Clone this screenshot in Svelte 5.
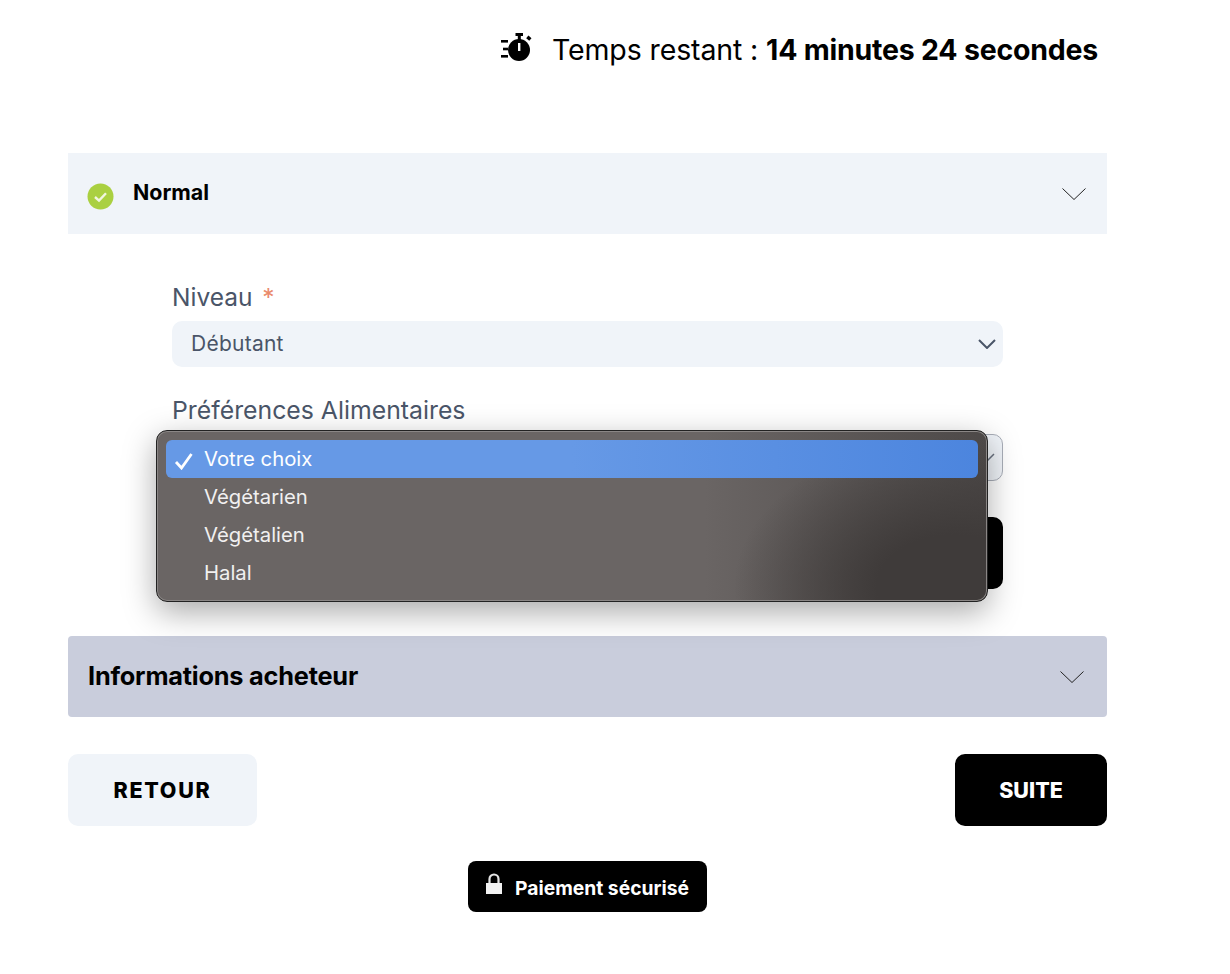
<script>
  const choices = ["Votre choix", "Végétarien", "Végétalien", "Halal"];
</script>

<div class="page">
  <div class="timer">
    <svg class="stopwatch" width="36" height="30" viewBox="0 0 36 30">
      <rect x="14.500" y="0" width="7.500" height="3" fill="#000" />
      <rect x="16.800" y="2" width="3" height="5" fill="#000" />
      <rect x="26" y="3.500" width="4" height="3.500" transform="rotate(40 28 5)" fill="#000" />
      <circle cx="18" cy="17" r="11" fill="#000" />
      <rect x="17" y="10" width="2.400" height="8" fill="#fff" />
      <rect x="0" y="7" width="7" height="2.600" fill="#000" />
      <rect x="2" y="14.700" width="5" height="2.600" fill="#000" />
      <rect x="0" y="22" width="7" height="2.600" fill="#000" />
    </svg>
    <span class="remaining">Temps restant : <b>14 minutes 24 secondes</b></span>
  </div>

  <section class="accordion">
    <header class="head light">
      <svg class="ok" width="27" height="27" viewBox="0 0 27 27">
        <circle cx="13.500" cy="13.500" r="13" fill="#aad041" />
        <path d="M8 14l4 3.600 7-7.400" fill="none" stroke="#f1f6e0" stroke-width="2.400" />
      </svg>
      <span class="title-small">Normal</span>
      <svg class="chev first" width="24" height="12" viewBox="0 0 24 12">
        <path d="M.5.500 12 11.500 23.500.5" fill="none" stroke="#222" stroke-width="1" />
      </svg>
    </header>

    <form class="form" on:submit|preventDefault>
      <div class="label">Niveau <i>*</i></div>
      <div class="select">
        <span class="value">Débutant</span>
        <svg width="18" height="10" viewBox="0 0 18 10">
          <path d="M1 1l8 8 8-8" fill="none" stroke="#4a5568" stroke-width="2" />
        </svg>
      </div>

      <div class="label second">Préférences Alimentaires</div>
      <div class="field">
        <div class="select outlined">
          <svg width="18" height="10" viewBox="0 0 18 10">
            <path d="M1 1l8 8 8-8" fill="none" stroke="#6b7280" stroke-width="1.500" />
          </svg>
        </div>
        <ul class="popup">
          {#each choices as c, i}
            <li class:active={i === 0}>
              {#if i === 0}
                <svg width="20" height="18" viewBox="0 0 20 18">
                  <path d="M2 10l5.500 6L17.500 2" fill="none" stroke="#fff" stroke-width="2.800" />
                </svg>
              {/if}
              <span>{c}</span>
            </li>
          {/each}
        </ul>
      </div>

      <div class="form-action"></div>
    </form>

    <header class="head dark">
      <span class="title-large">Informations acheteur</span>
      <svg class="chev" width="24" height="12" viewBox="0 0 24 12">
        <path d="M.5.500 12 11.500 23.500.5" fill="none" stroke="#222" stroke-width="1" />
      </svg>
    </header>
  </section>

  <div class="nav">
    <button class="back">RETOUR</button>
    <button class="next">SUITE</button>
  </div>

  <div class="secure-row">
    <div class="secure">
      <svg width="18" height="22" viewBox="0 0 18 22">
        <path d="M4.500 11V6a4.500 4.500 0 0 1 9 0v5" fill="none" stroke="#e4e4e4" stroke-width="2.200" />
        <rect x="1" y="10" width="16" height="11" fill="#f2f2f2" />
      </svg>
      <span>Paiement sécurisé</span>
    </div>
  </div>
</div>

<style>
  :global(body) {
    background: #fff;
    font-family: "Inter", "Liberation Sans", sans-serif;
    color: #000;
  }

  .page {
    width: 1039px;
    margin-left: 68px;
    padding-top: 30px;
    padding-bottom: 62px;
  }

  .timer {
    display: flex;
    justify-content: flex-end;
    align-items: center;
    gap: 15px;
    height: 40px;
    padding-right: 9px;
    font-size: 28.500px;
    margin-bottom: 83px;
  }

  .remaining {
    margin-top: -2px;
    letter-spacing: -0.12px;
  }

  .timer b {
    font-weight: 700;
    letter-spacing: -0.22px;
  }

  .stopwatch {
    margin-top: -4px;
  }

  .head {
    display: flex;
    align-items: center;
    height: 81px;
  }

  .head.light {
    background: #f0f4f9;
    padding-left: 19px;
  }

  .head.dark {
    background: #c9cddc;
    padding-left: 20px;
    border-radius: 4px;
  }

  .ok {
    margin-top: 5px;
    margin-right: 19px;
  }

  .title-small {
    font-size: 21.400px;
    font-weight: 700;
    margin-top: -3px;
  }

  .title-large {
    font-size: 25.300px;
    font-weight: 700;
    letter-spacing: -0.2px;
    margin-top: -2px;
  }

  .chev {
    margin-left: auto;
    margin-right: 23px;
  }

  .chev.first {
    margin-right: 21px;
  }

  .form {
    padding: 48px 104px 47px;
  }

  .label {
    height: 39px;
    font-size: 24.500px;
    line-height: 30px;
    color: #4a5568;
  }

  .label i {
    font-style: normal;
    color: #ea8a6c;
    margin-left: 3px;
  }

  .label.second {
    margin-top: 28px;
    height: 39px;
    font-size: 24.800px;
  }

  .select {
    display: flex;
    align-items: center;
    justify-content: space-between;
    height: 46px;
    padding: 0 7px 0 19px;
    border-radius: 10px;
    background: #f0f4f9;
    font-size: 21px;
    letter-spacing: 0.25px;
    color: #4a5568;
  }

  .value {
    margin-top: -2px;
  }

  .select.outlined {
    height: 47px;
    box-sizing: border-box;
    justify-content: flex-end;
    border: 1px solid #a9aeb8;
  }

  .field {
    position: relative;
  }

  .popup {
    position: absolute;
    left: -16px;
    top: -4px;
    width: 832px;
    height: 172px;
    box-sizing: border-box;
    margin: 0;
    padding: 9px 9px 0;
    list-style: none;
    border-radius: 11px;
    border: 1px solid #222;
    background:
      radial-gradient(ellipse 220px 150px at 96% 92%, #3f3b3a 35%, rgba(63, 59, 58, 0) 100%),
      linear-gradient(90deg, #6a6564 0%, #6a6564 66%, #4d4948 100%);
    box-shadow:
      inset 0 0 0 1px #8a8685,
      0 10px 32px rgba(0, 0, 0, 0.34);
    font-size: 20.300px;
    color: #f1f0f0;
  }

  .popup li {
    position: relative;
    display: flex;
    align-items: center;
    height: 38px;
    box-sizing: border-box;
    padding: 0 0 2px 38px;
    border-radius: 6px;
  }

  .popup li.active {
    color: #fff;
    background: linear-gradient(90deg, #6699e6 0%, #6699e6 50%, #4c85de 100%);
  }

  .popup li svg {
    position: absolute;
    left: 8px;
    top: 12px;
  }

  .form-action {
    height: 72px;
    margin-top: 36px;
    background: #000;
    border-radius: 10px;
  }

  .nav {
    display: flex;
    justify-content: space-between;
    margin-top: 37px;
  }

  .nav button {
    height: 72px;
    border: 0;
    border-radius: 10px;
    font-family: inherit;
    font-size: 21.500px;
    font-weight: 800;
  }

  .back {
    width: 189px;
    background: #f0f4f9;
    color: #000;
    letter-spacing: 1.700px;
  }

  .next {
    width: 152px;
    background: #000;
    color: #fff;
  }

  .secure-row {
    display: flex;
    justify-content: center;
    margin-top: 35px;
  }

  .secure {
    display: flex;
    align-items: center;
    gap: 12px;
    width: 239px;
    height: 51px;
    box-sizing: border-box;
    padding: 3px 0 0 17px;
    border-radius: 8px;
    background: #000;
    color: #fff;
    font-size: 19.300px;
    font-weight: 700;
  }

  .secure svg {
    margin-top: -9px;
  }
</style>
